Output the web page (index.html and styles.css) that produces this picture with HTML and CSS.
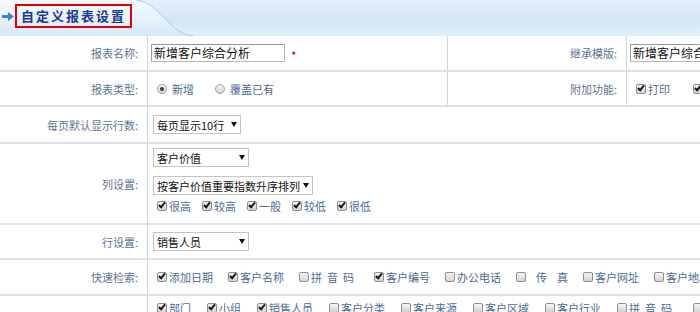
FILE: index.html
```html
<!DOCTYPE html>
<html lang="zh-CN">
<head>
    <meta charset="UTF-8">
    <title>自定义报表设置</title>
    <link rel="stylesheet" href="styles.css">
</head>
<body>
    <div class="page">
        <div class="head">
            <div class="tab">
                <svg class="arrow" width="12" height="9" viewBox="0 0 12 9"><path d="M0 3h6V0l6 4.5L6 9V6H0z" fill="#3d87d0"/></svg>
                <h1 class="title">自定义报表设置</h1>
            </div>
            <svg class="curve" width="60" height="36" viewBox="0 0 60 36">
                <defs>
                    <linearGradient id="tabg" x1="0" y1="0" x2="0" y2="1">
                        <stop offset="0" stop-color="#f7fbfe"/>
                        <stop offset="1" stop-color="#d6e8f8"/>
                    </linearGradient>
                </defs>
                <path d="M0 0C20 0 34 36 56 36L0 36Z" fill="url(#tabg)"/>
                <path d="M0 0.5C20 0.5 34 35.5 56 35.5" fill="none" stroke="#a9cdea" stroke-width="1"/>
            </svg>
            <div class="rest"></div>
        </div>

        <div class="form">
            <!-- row 1 -->
            <div class="lab">报表名称:</div>
            <div class="val"><span class="input">新增客户综合分析</span><span class="req">*</span></div>
            <div class="lab">继承模版:</div>
            <div class="val"><span class="input">新增客户综合分析</span></div>

            <!-- row 2 -->
            <div class="lab">报表类型:</div>
            <div class="val opts radios">
                <label class="opt"><span class="rb on"></span>新增</label>
                <label class="opt"><span class="rb"></span>覆盖已有</label>
            </div>
            <div class="lab">附加功能:</div>
            <div class="val opts extra">
                <label class="opt"><span class="cb on"></span>打印</label>
                <label class="opt"><span class="cb on"></span>导出</label>
            </div>

            <!-- row 3 -->
            <div class="lab">每页默认显示行数:</div>
            <div class="val full"><span class="sel w88">每页显示10行<i class="dd"></i></span></div>

            <!-- row 4 -->
            <div class="lab">列设置:</div>
            <div class="val full stack">
                <span class="sel w96">客户价值<i class="dd"></i></span>
                <span class="sel w160">按客户价值重要指数升序排列<i class="dd"></i></span>
                <div class="opts levels">
                    <label class="opt"><span class="cb on"></span>很高</label>
                    <label class="opt"><span class="cb on"></span>较高</label>
                    <label class="opt"><span class="cb on"></span>一般</label>
                    <label class="opt"><span class="cb on"></span>较低</label>
                    <label class="opt"><span class="cb on"></span>很低</label>
                </div>
            </div>

            <!-- row 5 -->
            <div class="lab">行设置:</div>
            <div class="val full"><span class="sel w96">销售人员<i class="dd"></i></span></div>

            <!-- row 6 -->
            <div class="lab">快速检索:</div>
            <div class="val full opts search">
                <label class="opt"><span class="cb on"></span>添加日期</label>
                <label class="opt"><span class="cb on"></span>客户名称</label>
                <label class="opt"><span class="cb"></span><span class="spaced">拼音码</span></label>
                <label class="opt"><span class="cb on"></span>客户编号</label>
                <label class="opt"><span class="cb"></span>办公电话</label>
                <label class="opt"><span class="cb"></span><span class="fax"><span>传</span>真</span></label>
                <label class="opt"><span class="cb"></span>客户网址</label>
                <label class="opt"><span class="cb"></span>客户地址</label>
            </div>

            <!-- row 7 -->
            <div class="lab">显示字段:</div>
            <div class="val full lines">
                <div class="opts group">
                    <label class="opt"><span class="cb on"></span>部门</label>
                    <label class="opt"><span class="cb on"></span>小组</label>
                    <label class="opt"><span class="cb on"></span>销售人员</label>
                    <label class="opt"><span class="cb"></span>客户分类</label>
                    <label class="opt"><span class="cb"></span>客户来源</label>
                    <label class="opt"><span class="cb"></span>客户区域</label>
                    <label class="opt"><span class="cb"></span>客户行业</label>
                    <label class="opt"><span class="cb"></span><span class="spaced">拼音码</span></label>
                    <label class="opt"><span class="cb"></span>客户</label>
                </div>
                <div class="opts group">
                    <label class="opt"><span class="cb"></span>办公电话</label>
                    <label class="opt"><span class="cb"></span>客户网址</label>
                </div>
            </div>
        </div>
    </div>
</body>
</html>
```

FILE: styles.css
```css
html, body {
    margin: 0;
    overflow: hidden;
    background: #fff;
}

body {
    font-family: "Noto Sans CJK SC", "Liberation Sans", sans-serif;
    font-size: 11px;
}

.page {
    width: 860px;
}

/* header bar */
.head {
    display: flex;
    height: 36px;
}

.tab {
    width: 137px;
    flex: none;
    display: flex;
    align-items: flex-start;
    padding: 4px 0 0 2px;
    box-sizing: border-box;
    background: linear-gradient(#f7fbfe, #d6e8f8);
}

.arrow {
    margin-top: 8px;
    margin-right: 1px;
}

.title {
    margin: 0;
    width: 117px;
    height: 24px;
    box-sizing: border-box;
    border: 2px solid #e10000;
    padding-left: 4px;
    font-size: 13px;
    line-height: 20px;
    font-weight: bold;
    letter-spacing: 2px;
    color: #1d3b8d;
    white-space: nowrap;
}

.curve {
    flex: none;
    display: block;
    background: linear-gradient(#e4f0fa, #d2e5f6 55%, #e2eff9);
}

.rest {
    flex: 1;
    background: linear-gradient(#e4f0fa, #d2e5f6 55%, #e2eff9);
}

/* form grid */
.form {
    display: grid;
    grid-template-columns: 148px 300px 179px 1fr;
    grid-template-rows: 36px 35px 37px 81px 35px 36px 64px;
}

.lab, .val {
    box-sizing: border-box;
    border-bottom: 2px solid #dde1e6;
    border-right: 1px solid #cdd6e2;
    display: flex;
    align-items: center;
    white-space: nowrap;
    overflow: hidden;
}

.lab {
    justify-content: flex-end;
    padding-right: 9px;
    color: #5e7394;
}

.val {
    padding-left: 3px;
}

.val.full {
    grid-column: span 3;
}

.input {
    display: inline-block;
    width: 134px;
    height: 18px;
    box-sizing: border-box;
    border: 1px solid #b8b8b8;
    border-top-color: #9c9c9c;
    border-left-color: #9c9c9c;
    padding-left: 2px;
    font-size: 12px;
    line-height: 16px;
    color: #111;
}

.req {
    color: #e00000;
    font-size: 12px;
    margin: 5px 0 0 6px;
}

.sel {
    display: inline-flex;
    align-items: center;
    justify-content: space-between;
    height: 19px;
    box-sizing: border-box;
    border: 1px solid #c4c4c4;
    padding: 0 3px 0 3px;
    margin-left: 2px;
    color: #111;
    background: #fff;
}

.w88 { width: 88px; }
.w96 { width: 96px; }
.w160 { width: 160px; }

.dd {
    width: 0;
    height: 0;
    border-left: 3px solid transparent;
    border-right: 3px solid transparent;
    border-top: 5px solid #111;
}

.stack {
    flex-direction: column;
    align-items: flex-start;
    justify-content: flex-start;
    padding-top: 4px;
}

.stack .sel + .sel {
    margin-top: 9px;
}

.lines {
    flex-direction: column;
    align-items: flex-start;
    justify-content: flex-start;
    padding-top: 4px;
    gap: 8px;
}

/* checkbox and radio lists */
.opts {
    display: flex;
    align-items: center;
    gap: 15px;
    padding-left: 9px;
    color: #4e6a95;
}

.stack .opts {
    padding-left: 6px;
    margin-top: 3px;
    gap: 11px;
}

.lines .opts {
    padding-left: 6px;
}

.radios { gap: 21px; }
.extra { gap: 23px; }
.group { gap: 16px; }

.opt {
    display: inline-flex;
    align-items: center;
    gap: 2px;
}

.radios .opt {
    gap: 5px;
}

.cb, .rb {
    position: relative;
    display: inline-block;
    width: 10px;
    height: 10px;
    box-sizing: border-box;
    border: 1px solid #8e8e8e;
    background: linear-gradient(#f3f3f3, #d4d4d4);
}

.cb {
    border-radius: 2px;
}

.cb.on::after {
    content: "";
    position: absolute;
    left: 2px;
    top: -1px;
    width: 2px;
    height: 5px;
    border: solid #1b1b1b;
    border-width: 0 2px 2px 0;
    transform: rotate(40deg);
}

.rb {
    border-radius: 50%;
    border-color: #a0a0a0;
}

.rb.on::after {
    content: "";
    position: absolute;
    left: 2px;
    top: 2px;
    width: 4px;
    height: 4px;
    border-radius: 50%;
    background: #3a3a3a;
}

.spaced {
    letter-spacing: 5px;
}

.fax {
    padding-left: 8px;
}

.fax span {
    margin-right: 10px;
}
```
